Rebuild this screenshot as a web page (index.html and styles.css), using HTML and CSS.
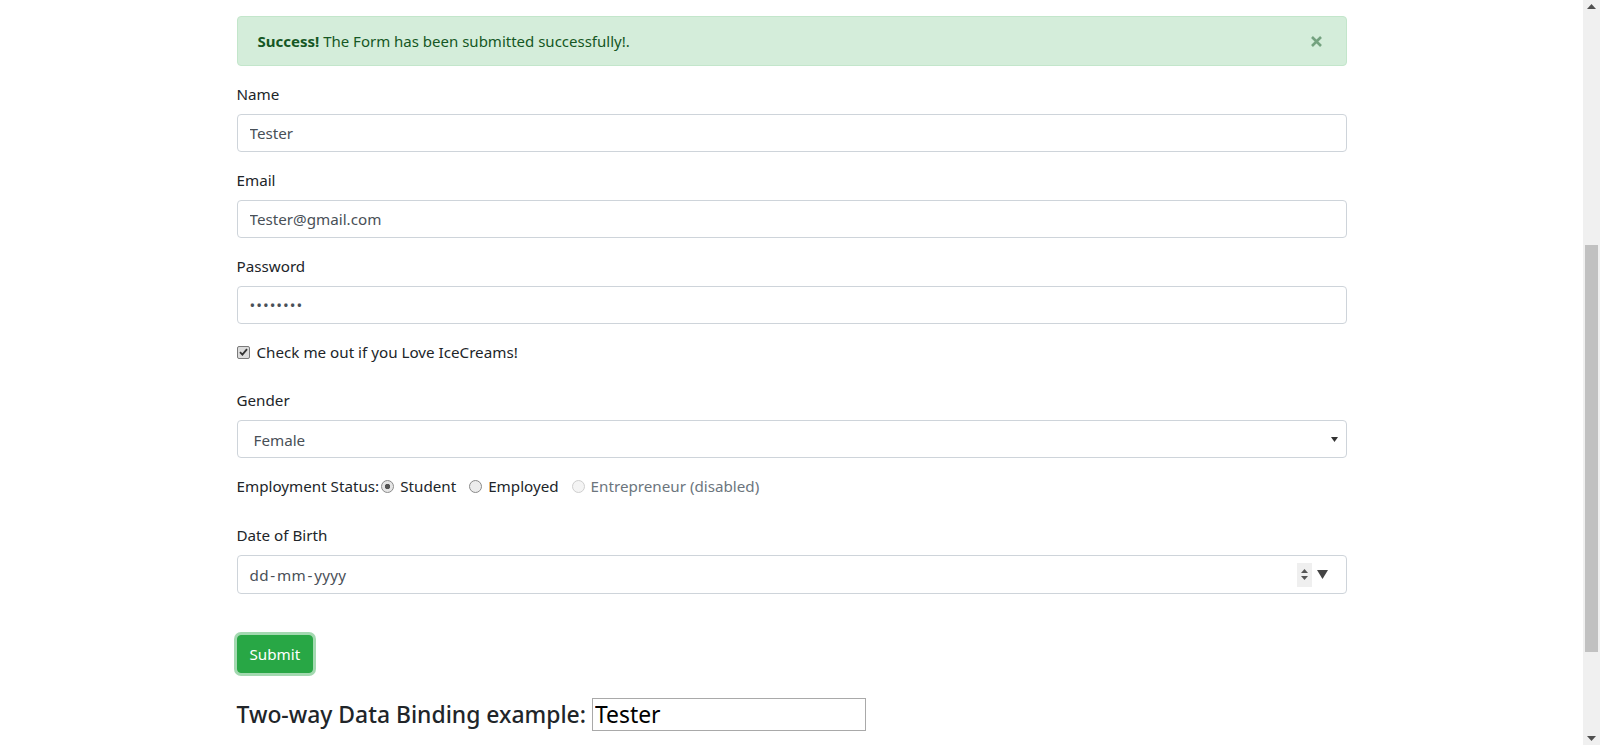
FILE: index.html
```html
<!DOCTYPE html>
<html lang="en">
<head>
<meta charset="utf-8">
<title>Form</title>
<link rel="stylesheet" href="styles.css">
</head>
<body>
<div class="page">
  <main class="viewport">
    <div class="container">
      <div class="alert">
        <div class="alert-text"><strong>Success!</strong> The Form has been submitted successfully!.</div>
        <span class="close" aria-label="Close">
          <svg width="11" height="11" viewBox="0 0 11 11"><path d="M1 1L10 10M10 1L1 10" stroke="#74a27f" stroke-width="2.6" stroke-linecap="butt"/></svg>
        </span>
      </div>
      <form class="form">
        <div class="form-group">
          <label class="label">Name</label>
          <input class="form-control" type="text" value="Tester">
        </div>
        <div class="form-group">
          <label class="label">Email</label>
          <input class="form-control" type="text" value="Tester@gmail.com">
        </div>
        <div class="form-group">
          <label class="label">Password</label>
          <input class="form-control password" type="password" value="testtest">
        </div>
        <div class="form-check check-row">
          <span class="checkbox">
            <svg width="9" height="8" viewBox="0 0 9 8"><path d="M1 4.2L3.4 6.6L8 1.2" fill="none" stroke="#333" stroke-width="1.8"/></svg>
          </span>
          <span class="check-label">Check me out if you Love IceCreams!</span>
        </div>
        <div class="form-group">
          <label class="label">Gender</label>
          <div class="form-control select">
            <span class="select-value">Female</span>
            <svg class="select-arrow" width="7" height="5" viewBox="0 0 7 5"><path d="M0 0H7L3.5 5Z" fill="#333"/></svg>
          </div>
        </div>
        <div class="radio-row">
          <span class="radio-title">Employment Status:</span>
          <span class="radio-item"><span class="radio checked"></span><span>Student</span></span>
          <span class="radio-item"><span class="radio"></span><span>Employed</span></span>
          <span class="radio-item disabled"><span class="radio"></span><span>Entrepreneur (disabled)</span></span>
        </div>
        <div class="form-group date-group">
          <label class="label">Date of Birth</label>
          <div class="form-control date">
            <span class="date-text">dd<span class="sep">-</span>mm<span class="sep">-</span>yyyy</span>
            <span class="date-controls">
              <span class="spin">
                <svg width="7" height="4" viewBox="0 0 7 4"><path d="M0 4H7L3.5 0Z" fill="#555"/></svg>
                <svg width="7" height="4" viewBox="0 0 7 4"><path d="M0 0H7L3.5 4Z" fill="#555"/></svg>
              </span>
              <svg class="drop" width="11" height="9" viewBox="0 0 11 9"><path d="M0 0H11L5.5 9Z" fill="#444"/></svg>
            </span>
          </div>
        </div>
        <button type="button" class="btn">Submit</button>
      </form>
      <h4 class="binding">Two-way Data Binding example: <input class="bind-input" type="text" value="Tester"></h4>
    </div>
  </main>
  <aside class="scrollbar">
    <svg class="sb-arrow" width="9" height="5" viewBox="0 0 9 5"><path d="M0 5H9L4.5 0Z" fill="#505050"/></svg>
    <div class="sb-track"><div class="sb-thumb"></div></div>
    <svg class="sb-arrow" width="9" height="5" viewBox="0 0 9 5"><path d="M0 0H9L4.5 5Z" fill="#505050"/></svg>
  </aside>
</div>
</body>
</html>
```
FILE: styles.css
```css
* { box-sizing: border-box; }
html, body { margin: 0; padding: 0; height: 745px; overflow: hidden; }
body {
  font-family: "Noto Sans", "Open Sans", sans-serif;
  font-size: 15.2px;
  line-height: 24px;
  color: #212529;
  background: #fff;
}
.page { display: flex; height: 745px; }
.viewport { flex: 1; min-width: 0; }
.container { max-width: 1140px; margin: 0 auto; padding: 16px 15px 0; }

.alert {
  display: flex;
  justify-content: space-between;
  align-items: center;
  padding: 12px 24px 12px 20px;
  border: 1px solid #c3e6cb;
  border-radius: 4px;
  background: #d4edda;
  color: #155724;
  margin-bottom: 16px;
  height: 50px;
}
.alert-text { font-size: 15px; }
.alert strong { font-weight: 700; }
.close { display: flex; margin-top: 1px; }

.form-group { margin-bottom: 16px; }
.label { display: inline-block; margin-bottom: 8px; }
.form-control {
  display: block;
  width: 100%;
  height: 38px;
  padding: 6px 12px;
  font: inherit;
  font-size: 15.2px;
  line-height: 24px;
  color: #495057;
  background: #fff;
  border: 1px solid #ced4da;
  border-radius: 4px;
  outline: none;
}
.password { letter-spacing: 1px; }

.check-row { display: flex; align-items: center; height: 24px; margin-bottom: 24px; }
.checkbox {
  width: 13px; height: 13px;
  margin-right: 7px;
  border: 1px solid #7a7a7a;
  border-radius: 2px;
  background: #dcdcdc;
  display: flex; align-items: center; justify-content: center;
}

.select { display: flex; align-items: center; justify-content: space-between; padding-left: 16px; padding-right: 8px; }
.select-value { color: #495057; margin-top: 1px; }

.radio-row { display: flex; align-items: center; height: 24px; margin-bottom: 25px; margin-top: 1px; }
.radio-title { margin-right: 2px; }
.radio-item { display: flex; align-items: center; margin-right: 13px; }
.radio {
  width: 13px; height: 13px;
  border-radius: 50%;
  border: 1px solid #8a8a8a;
  background: #ececec;
  margin-right: 6px;
}
.radio.checked { background: radial-gradient(circle, #555 0, #555 2.4px, #e6e6e6 3px); }
.radio-item.disabled { color: #6c757d; }
.radio-item.disabled .radio { border-color: #cfcfcf; background: #f4f4f4; }

.date-group { margin-bottom: 41px; }
.date { display: flex; align-items: center; justify-content: space-between; padding-right: 18px; height: 39px; }
.date-text { letter-spacing: 0.3px; }
.sep { margin: 0 1.5px; }
.date-controls { display: flex; align-items: center; }
.spin {
  display: flex; flex-direction: column; align-items: center; justify-content: center;
  gap: 3px;
  width: 15px; height: 24px;
  background: #efefef;
  margin-right: 5px;
}

.btn {
  display: block;
  height: 38px;
  padding: 0 12px;
  font: inherit;
  font-size: 15.2px;
  line-height: 24px;
  color: #fff;
  background: #28a745;
  border: 1px solid #28a745;
  border-radius: 4px;
  box-shadow: 0 0 0 3px rgba(72, 180, 97, 0.5);
}

.binding {
  margin: 25px 0 0;
  font-size: 22.9px;
  font-weight: 500;
  line-height: 28.8px;
}
.bind-input {
  width: 274px;
  height: 33px;
  padding: 1px 2px;
  font: inherit;
  font-weight: 400;
  color: #000;
  border: 1px solid #a9a9a9;
  border-radius: 0;
  vertical-align: baseline;
}

.scrollbar {
  width: 17px;
  background: #f0f0f0;
  display: flex;
  flex-direction: column;
  align-items: center;
}
.sb-arrow { margin: 4px 0; flex: none; }
.sb-track { flex: 1; width: 100%; padding: 232px 2px 80px; }
.sb-thumb { height: 407px; background: #c1c1c1; }
```
